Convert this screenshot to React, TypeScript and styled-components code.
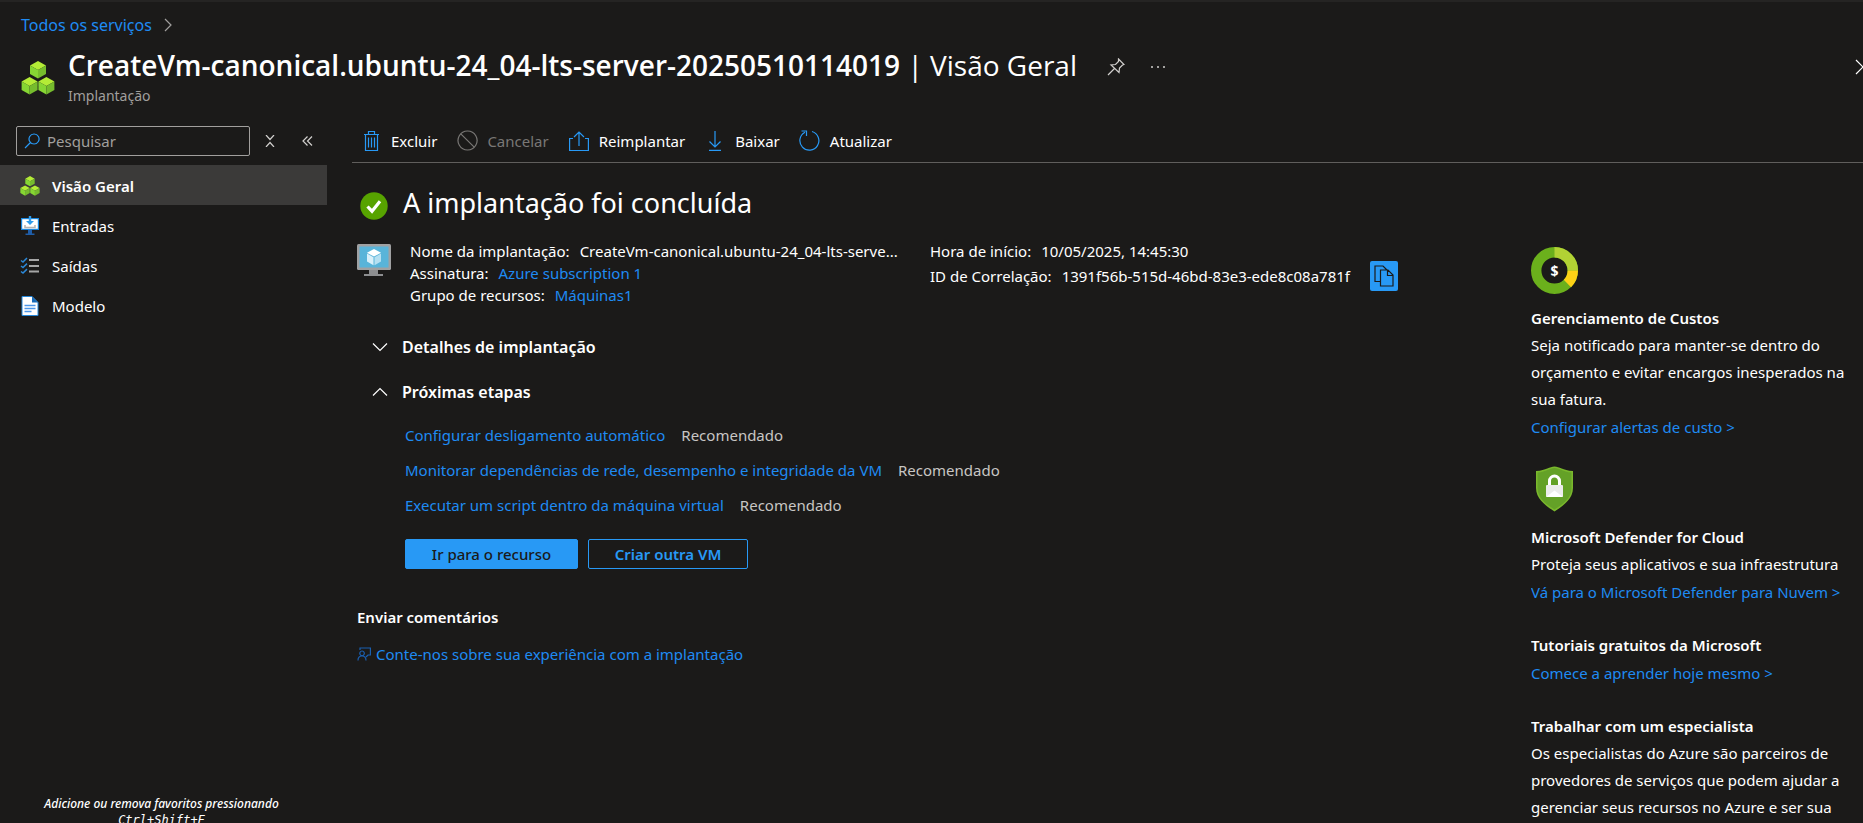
import React from "react";
import styled, { createGlobalStyle } from "styled-components";

const GlobalStyle = createGlobalStyle`
  *, *::before, *::after { box-sizing: border-box; }
  body {
    margin: 0;
    background: #1b1a19;
    color: #ffffff;
    font-family: "Noto Sans", "Open Sans", sans-serif;
    font-size: 15px;
  }
  h1, h2, h3, p, ul, dl, dd { margin: 0; padding: 0; }
  button, input { font: inherit; color: inherit; }
  svg { display: block; flex: none; }
`;

const Page = styled.div`
  display: flex;
  flex-direction: column;
  height: 100vh;
  overflow: hidden;
  border-top: 2px solid #252423;
`;

const Breadcrumb = styled.nav`
  display: flex;
  align-items: center;
  gap: 12px;
  padding: 11px 21px 0;
  font-size: 16px;
  line-height: 24px;
`;

const Link = styled.a`
  color: #1f8bf3;
  text-decoration: none;
  white-space: nowrap;
`;

const Header = styled.header`
  display: flex;
  align-items: flex-start;
  padding: 9px 0 0 21px;
  height: 83px;
`;

const HeaderIcon = styled.div`
  padding-top: 15px;
`;

const Titles = styled.div`
  padding-left: 13px;
`;

const PageTitle = styled.h1`
  font-family: "Open Sans", "Noto Sans", sans-serif;
  font-size: 28px;
  font-weight: 600;
  line-height: 38px;
  white-space: nowrap;
`;

const TitleSection = styled.span`
  font-weight: 400;
`;

const Subtitle = styled.p`
  color: #a19f9d;
  font-size: 14px;
  line-height: 24px;
`;

const HeaderActions = styled.div`
  display: flex;
  align-items: center;
  gap: 25px;
  padding: 12px 0 0 30px;
`;

const IconButton = styled.button`
  display: flex;
  align-items: center;
  justify-content: center;
  padding: 0;
  border: 0;
  background: none;
  color: #d2d0ce;
`;

const CloseButton = styled(IconButton)`
  margin: 13px -8px 0 auto;
  color: #ffffff;
`;

const Body = styled.div`
  display: flex;
  flex: 1;
  min-height: 0;
`;

const Sidebar = styled.aside`
  display: flex;
  flex-direction: column;
  flex: none;
  width: 327px;
`;

const SearchRow = styled.div`
  display: flex;
  align-items: flex-start;
  height: 45px;
  padding: 6px 0 0 16px;
`;

const SearchBox = styled.label`
  display: flex;
  align-items: center;
  gap: 7px;
  width: 234px;
  height: 30px;
  padding: 0 7px;
  border: 1px solid #a19f9d;
  border-radius: 2px;
  color: #2899f5;
`;

const SearchInput = styled.input`
  flex: 1;
  min-width: 0;
  padding: 0;
  border: 0;
  outline: 0;
  background: none;
  &::placeholder { color: #a19f9d; opacity: 1; }
`;

const SearchActions = styled.div`
  display: flex;
  align-items: center;
  gap: 27px;
  height: 30px;
  padding-left: 15px;
`;

const NavLink = styled.a<{ $active?: boolean }>`
  display: flex;
  align-items: center;
  gap: 12px;
  height: 40px;
  padding: 2px 0 0 20px;
  background: ${(p) => (p.$active ? "#3b3a39" : "transparent")};
  font-weight: ${(p) => (p.$active ? 600 : 400)};
  color: #ffffff;
  text-decoration: none;
`;

const FavoritesHint = styled.p`
  margin-top: auto;
  height: 30px;
  font-size: 12px;
  font-style: italic;
  font-weight: 500;
  line-height: 17px;
  text-align: center;
  padding: 2px 4px 0 0;
  white-space: nowrap;
`;

const Shortcut = styled.kbd`
  display: block;
  font-family: "DejaVu Sans Mono", monospace;
  font-size: 12px;
`;

const Content = styled.div`
  display: flex;
  flex-direction: column;
  flex: 1;
  min-width: 0;
  padding-left: 25px;
`;

const Toolbar = styled.div`
  display: flex;
  align-items: center;
  gap: 20px;
  height: 43px;
  padding: 0 9px 1px;
  border-bottom: 1px solid #605e5c;
`;

const ToolButton = styled.button`
  display: flex;
  align-items: center;
  gap: 10px;
  padding: 0;
  border: 0;
  background: none;
  white-space: nowrap;
  &:disabled { color: #797775; }
`;

const ToolIcon = styled.span`
  display: flex;
  justify-content: center;
  width: 20px;
`;

const Columns = styled.div`
  display: flex;
  flex: 1;
  min-height: 0;
`;

const Main = styled.main`
  flex: 1;
  min-width: 0;
  padding: 21px 0 0 5px;
`;

const StatusRow = styled.div`
  display: flex;
  align-items: center;
  gap: 15px;
  padding-left: 3px;
  height: 44px;
`;

const StatusTitle = styled.h2`
  font-size: 27px;
  font-weight: 400;
  line-height: 40px;
  padding-bottom: 6px;
`;

const Details = styled.div`
  display: flex;
  align-items: flex-start;
  padding-top: 12px;
`;

const DetailList = styled.dl<{ $width?: number }>`
  width: ${(p) => (p.$width ? p.$width + "px" : "auto")};
`;

const ResourceIcon = styled.div`
  width: 53px;
  padding-top: 4px;
`;

const DetailRow = styled.div<{ $tall?: boolean }>`
  display: flex;
  align-items: center;
  gap: 10px;
  height: ${(p) => (p.$tall ? 28 : 22)}px;
  white-space: nowrap;
`;

const CopyButton = styled(IconButton)`
  width: 28px;
  height: 30px;
  margin-left: 10px;
  border-radius: 2px;
  background: #2899f5;
  color: #1b1a19;
`;

const SectionToggle = styled.button`
  display: flex;
  align-items: center;
  gap: 14px;
  height: 45px;
  padding: 0 0 0 15px;
  border: 0;
  background: none;
  font-size: 16px;
  font-weight: 600;
`;

const Sections = styled.div`
  padding-top: 18px;
`;

const Steps = styled.ul`
  padding: 4px 0 0 48px;
  list-style: none;
`;

const Step = styled.li`
  display: flex;
  gap: 16px;
  line-height: 35px;
  white-space: nowrap;
`;

const Hint = styled.span`
  color: #c8c6c4;
`;

const ButtonRow = styled.div`
  display: flex;
  gap: 10px;
  padding: 16px 0 0 48px;
`;

const ActionButton = styled.button<{ $primary?: boolean }>`
  width: ${(p) => (p.$primary ? 173 : 160)}px;
  height: 30px;
  padding: 0;
  border: 1px solid #2899f5;
  border-radius: 2px;
  background: ${(p) => (p.$primary ? "#2899f5" : "transparent")};
  color: ${(p) => (p.$primary ? "#1b1a19" : "#2899f5")};
  font-weight: ${(p) => (p.$primary ? 500 : 600)};
`;

const Feedback = styled.section`
  padding-top: 34px;
`;

const SmallHeading = styled.h3`
  font-size: 15px;
  font-weight: 600;
  line-height: 28px;
`;

const FeedbackLink = styled(Link)`
  display: inline-flex;
  align-items: center;
  gap: 5px;
  padding-top: 9px;
  line-height: 28px;
`;

const Promos = styled.aside`
  flex: none;
  width: 332px;
  padding-top: 84px;
  overflow: hidden;
`;

const Promo = styled.section`
  padding-bottom: 25px;
`;

const PromoIcon = styled.div`
  width: 47px;
  height: 57px;
`;

const PromoText = styled.p`
  line-height: 27px;
`;

const PromoLink = styled(Link)`
  display: block;
  line-height: 28px;
`;

function Cubes({ size }: { size: number }) {
  const cube = (x: number, y: number) => (
    <g transform={`translate(${x} ${y})`}>
      <path d="M8 0 16 4.500 8 9 0 4.500Z" fill="#b4ec36" />
      <path d="M0 4.500 8 9V17.500L0 13Z" fill="#86d633" />
      <path d="M16 4.500 8 9V17.500L16 13Z" fill="#76bc2d" />
    </g>
  );
  return (
    <svg width={size} height={size} viewBox="0 0 34 34" aria-hidden="true">
      {cube(9, 0)}
      {cube(0.6, 16)}
      {cube(17.4, 16)}
    </svg>
  );
}

function Stroke({ w, h, d, color = "currentColor" }: { w: number; h: number; d: string; color?: string }) {
  return (
    <svg width={w} height={h} viewBox={`0 0 ${w} ${h}`} fill="none" stroke={color} strokeWidth="1.2" aria-hidden="true">
      <path d={d} />
    </svg>
  );
}

const BLUE = "#2899f5";

const InputsIcon = () => (
  <svg width="20" height="20" viewBox="0 0 20 20" aria-hidden="true">
    <path d="M1 2h18v12H1Z" fill="#1a86dc" />
    <path d="M2.200 3.200h15.600v9.600H2.200Z" fill="#fff" />
    <path d="M5 9v2.500h10V9" stroke="#b3b3b3" strokeWidth="1.500" fill="none" />
    <path d="M8.800 0h2.400v5H14l-4 4-4-4h2.800Z" fill="#2f9bea" />
    <path d="M8 14h4v3.500h2.500V19h-9v-1.500H8Z" fill="#1f5da8" />
  </svg>
);

const OutputsIcon = () => (
  <svg width="20" height="18" viewBox="0 0 20 18" fill="none" aria-hidden="true">
    <path d="M1 3.500l2 1.600L7 1M1 9l2 1.600 4-4M1 14.500l2 1.600 4-4" stroke="#2b88d8" strokeWidth="1.500" />
    <path d="M9 3h10M9 9h10M9 14.500h10" stroke="#a6a6a6" strokeWidth="2" />
  </svg>
);

const TemplateIcon = () => (
  <svg width="20" height="20" viewBox="0 0 20 20" aria-hidden="true">
    <path d="M2 .5h10l6 6V19.500H2Z" fill="#fff" stroke="#2486d8" />
    <path d="M12 .5v6h6Z" fill="#1569b8" />
    <path d="M4.500 9.500h11M4.500 12.500h11M4.500 15.500h7" stroke="#4a96ea" strokeWidth="1.500" />
  </svg>
);

const VmIcon = () => (
  <svg width="34" height="34" viewBox="0 0 34 34" aria-hidden="true">
    <rect width="34" height="26" rx="1.500" fill="#a0a1a2" />
    <rect x="2.500" y="2.500" width="29" height="21" fill="#59b4d9" />
    <path d="M12 26h9v4h5v2H7v-2h5Z" fill="#8d8e90" />
    <path d="M17 5l7 3.800-7 3.800-7-3.800Z" fill="#fff" />
    <path d="M10 9.600l6.500 3.600v8L10 17.400Z" fill="#d9f0fa" />
    <path d="M24 9.600l-6.500 3.600v8l6.500-3.800Z" fill="#b5e0f2" />
  </svg>
);

const CheckIcon = () => (
  <svg width="28" height="28" viewBox="0 0 28 28" aria-hidden="true">
    <circle cx="14" cy="14" r="13.700" fill="#57a300" />
    <path d="M7.500 14.500l4.500 4.700 8-10" fill="none" stroke="#fff" strokeWidth="3.200" />
  </svg>
);

const CostIcon = () => (
  <svg width="47" height="47" viewBox="0 0 47 47" aria-hidden="true">
    <circle cx="23.500" cy="23.500" r="18.300" fill="none" stroke="#6bb01c" strokeWidth="10.400" />
    <path d="M23.500 5.200A18.300 18.300 0 0 1 41.800 23.500" fill="none" stroke="#b2d234" strokeWidth="10.400" />
    <path d="M41.800 23.500a18.300 18.300 0 0 1-5.400 13" fill="none" stroke="#fdd116" strokeWidth="10.400" />
    <text x="23.500" y="28.500" textAnchor="middle" fontSize="14" fontWeight="700" fill="#fff">$</text>
  </svg>
);

const DefenderIcon = () => (
  <svg width="47" height="46" viewBox="0 0 47 46" aria-hidden="true">
    <path d="M23.500.5c5 0 8 4 18.500 4.500v17c0 11-10 18-18.500 23.500C15 40 5 33 5 22V5C15.500 4.500 18.500.5 23.500.5Z" fill="#7ab82c" />
    <path d="M23.500 2c5 0 8 4 17 4.500V22c0 10-9 16.500-17 21.500C15.500 38.500 6.500 32 6.500 22V6.500C15.500 6 18.500 2 23.500 2Z" fill="#64a127" />
    <path d="M18.500 20v-5a5 5 0 0 1 10 0v5" fill="none" stroke="#fff" strokeWidth="3" />
    <rect x="15" y="19" width="17" height="12" rx="1" fill="#ececec" />
    <path d="M15 31l8.500-6.500L32 31Z" fill="#fff" />
  </svg>
);

const tools = [
  { label: "Excluir", icon: <Stroke w={17} h={20} color={BLUE} d="M1 3.500h15M5.500 3.500v-3h6v3M2.500 3.500v16h12v-16M5.500 6.500v10M8.500 6.500v10M11.500 6.500v10" /> },
  { label: "Cancelar", disabled: true, icon: <Stroke w={21} h={21} d="M10.500 1a9.500 9.500 0 1 0 .1 0ZM3.800 3.800l13.400 13.400" /> },
  { label: "Reimplantar", icon: <Stroke w={20} h={20} color={BLUE} d="M4 7.500H.6v12h18.800v-12H16M10 15V1M5 6l5-5 5 5" /> },
  { label: "Baixar", icon: <Stroke w={14} h={20} color={BLUE} d="M7 0v16M1.500 10.500 7 16l5.500-5.500M1 19.400h12" /> },
  { label: "Atualizar", icon: <Stroke w={21} h={21} color={BLUE} d="M13 1.500A9.500 9.500 0 1 1 6 2.200M2.500 1h5v5" /> },
];

const steps = [
  "Configurar desligamento automático",
  "Monitorar dependências de rede, desempenho e integridade da VM",
  "Executar um script dentro da máquina virtual",
];

export default function App() {
  return (
    <>
      <GlobalStyle />
      <Page>
        <Breadcrumb aria-label="Navegação">
          <Link href="#">Todos os serviços</Link>
          <Stroke w={8} h={14} color="#a19f9d" d="M1 1l6 6-6 6" />
        </Breadcrumb>
        <Header>
          <HeaderIcon><Cubes size={34} /></HeaderIcon>
          <Titles>
            <PageTitle>
              CreateVm-canonical.ubuntu-24_04-lts-server-20250510114019 <TitleSection>| Visão Geral</TitleSection>
            </PageTitle>
            <Subtitle>Implantação</Subtitle>
          </Titles>
          <HeaderActions>
            <IconButton aria-label="Fixar">
              <Stroke w={18} h={18} d="M11.500 1l5.500 5.500-1.500.5-3 3-.5 4.500L4 7l4.500-.5 3-3ZM7.500 10.500 1 17" />
            </IconButton>
            <IconButton aria-label="Mais">
              <svg width="16" height="4" viewBox="0 0 16 4" fill="currentColor" aria-hidden="true">
                <circle cx="2" cy="2" r="1" /><circle cx="8" cy="2" r="1" /><circle cx="14" cy="2" r="1" />
              </svg>
            </IconButton>
          </HeaderActions>
          <CloseButton aria-label="Fechar">
            <Stroke w={16} h={16} d="M1 1l14 14M15 1 1 15" />
          </CloseButton>
        </Header>
        <Body>
          <Sidebar>
            <SearchRow>
              <SearchBox>
                <Stroke w={16} h={16} d="M10 1a5 5 0 1 0 .1 0ZM6.500 9.500 1 15" />
                <SearchInput placeholder="Pesquisar" aria-label="Pesquisar" />
              </SearchBox>
              <SearchActions>
                <IconButton aria-label="Recolher tudo"><Stroke w={10} h={12} d="M1 0l4 4.500L9 0M1 12l4-4.500L9 12" /></IconButton>
                <IconButton aria-label="Recolher menu"><Stroke w={11} h={12} d="M5.500 1.500 1 6l4.500 4.500M10 1.500 5.500 6l4.500 4.500" /></IconButton>
              </SearchActions>
            </SearchRow>
            <nav aria-label="Menu">
              <NavLink href="#" $active aria-current="page"><Cubes size={20} />Visão Geral</NavLink>
              <NavLink href="#"><InputsIcon />Entradas</NavLink>
              <NavLink href="#"><OutputsIcon />Saídas</NavLink>
              <NavLink href="#"><TemplateIcon />Modelo</NavLink>
            </nav>
            <FavoritesHint>
              Adicione ou remova favoritos pressionando
              <Shortcut>Ctrl+Shift+F</Shortcut>
            </FavoritesHint>
          </Sidebar>
          <Content>
            <Toolbar>
              {tools.map((t) => (
                <ToolButton key={t.label} disabled={t.disabled}><ToolIcon>{t.icon}</ToolIcon>{t.label}</ToolButton>
              ))}
            </Toolbar>
            <Columns>
              <Main>
                <StatusRow>
                  <CheckIcon />
                  <StatusTitle>A implantação foi concluída</StatusTitle>
                </StatusRow>
                <Details>
                  <ResourceIcon><VmIcon /></ResourceIcon>
                  <DetailList $width={520}>
                    <DetailRow><dt>Nome da implantação:</dt><dd>CreateVm-canonical.ubuntu-24_04-lts-serve...</dd></DetailRow>
                    <DetailRow><dt>Assinatura:</dt><dd><Link href="#">Azure subscription 1</Link></dd></DetailRow>
                    <DetailRow><dt>Grupo de recursos:</dt><dd><Link href="#">Máquinas1</Link></dd></DetailRow>
                  </DetailList>
                  <DetailList>
                    <DetailRow><dt>Hora de início:</dt><dd>10/05/2025, 14:45:30</dd></DetailRow>
                    <DetailRow $tall>
                      <dt>ID de Correlação:</dt>
                      <dd>1391f56b-515d-46bd-83e3-ede8c08a781f</dd>
                      <CopyButton aria-label="Copiar">
                        <Stroke w={20} h={22} d="M6 16.500H1V1h8l4 4M6.500 5h7.500l5 5v11H6.500ZM13.500 5v5.500H19" />
                      </CopyButton>
                    </DetailRow>
                  </DetailList>
                </Details>
                <Sections>
                  <SectionToggle aria-expanded={false}>
                    <Stroke w={16} h={10} d="M1 1.500l7 7 7-7" />Detalhes de implantação
                  </SectionToggle>
                  <SectionToggle aria-expanded={true}>
                    <Stroke w={16} h={10} d="M1 8.500l7-7 7 7" />Próximas etapas
                  </SectionToggle>
                </Sections>
                <Steps>
                  {steps.map((s) => (
                    <Step key={s}><Link href="#">{s}</Link><Hint>Recomendado</Hint></Step>
                  ))}
                </Steps>
                <ButtonRow>
                  <ActionButton $primary>Ir para o recurso</ActionButton>
                  <ActionButton>Criar outra VM</ActionButton>
                </ButtonRow>
                <Feedback>
                  <SmallHeading>Enviar comentários</SmallHeading>
                  <FeedbackLink href="#">
                    <Stroke w={14} h={14} color="#1a5fb0" d="M3 3V1h10.400v7H11l-2 2M5 4a2.300 2.300 0 1 0 .1 0ZM1 13.500C1 7.500 9 7.500 9 13.500" />
                    Conte-nos sobre sua experiência com a implantação
                  </FeedbackLink>
                </Feedback>
              </Main>
              <Promos>
                <Promo>
                  <PromoIcon><CostIcon /></PromoIcon>
                  <SmallHeading>Gerenciamento de Custos</SmallHeading>
                  <PromoText>Seja notificado para manter-se dentro do orçamento e evitar encargos inesperados na sua fatura.</PromoText>
                  <PromoLink href="#">Configurar alertas de custo &gt;</PromoLink>
                </Promo>
                <Promo>
                  <PromoIcon><DefenderIcon /></PromoIcon>
                  <SmallHeading>Microsoft Defender for Cloud</SmallHeading>
                  <PromoText>Proteja seus aplicativos e sua infraestrutura</PromoText>
                  <PromoLink href="#">Vá para o Microsoft Defender para Nuvem &gt;</PromoLink>
                </Promo>
                <Promo>
                  <SmallHeading>Tutoriais gratuitos da Microsoft</SmallHeading>
                  <PromoLink href="#">Comece a aprender hoje mesmo &gt;</PromoLink>
                </Promo>
                <Promo>
                  <SmallHeading>Trabalhar com um especialista</SmallHeading>
                  <PromoText>Os especialistas do Azure são parceiros de provedores de serviços que podem ajudar a gerenciar seus recursos no Azure e ser sua</PromoText>
                </Promo>
              </Promos>
            </Columns>
          </Content>
        </Body>
      </Page>
    </>
  );
}
